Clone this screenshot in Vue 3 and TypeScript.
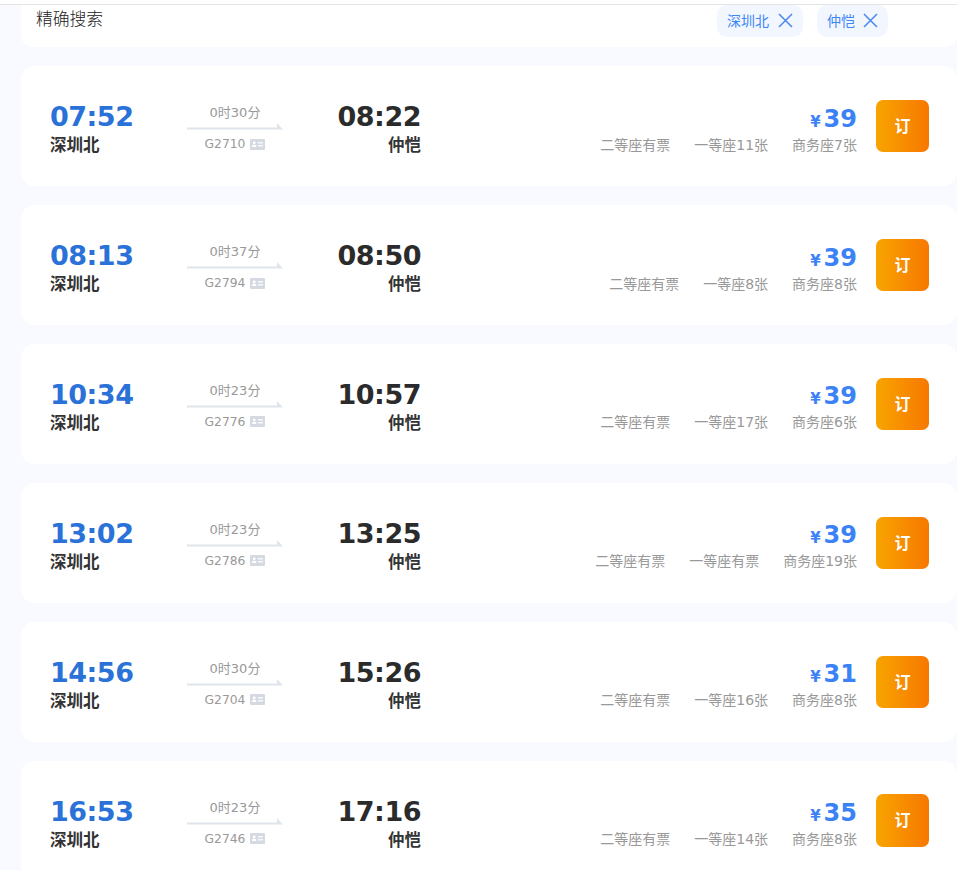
<script setup lang="ts">
interface Train {
  dep: string; arr: string; dur: string; code: string; price: number; seats: string[];
}
const trains: Train[] = [
  { dep: '07:52', arr: '08:22', dur: '0时30分', code: 'G2710', price: 39, seats: ['二等座有票', '一等座11张', '商务座7张'] },
  { dep: '08:13', arr: '08:50', dur: '0时37分', code: 'G2794', price: 39, seats: ['二等座有票', '一等座8张', '商务座8张'] },
  { dep: '10:34', arr: '10:57', dur: '0时23分', code: 'G2776', price: 39, seats: ['二等座有票', '一等座17张', '商务座6张'] },
  { dep: '13:02', arr: '13:25', dur: '0时23分', code: 'G2786', price: 39, seats: ['二等座有票', '一等座有票', '商务座19张'] },
  { dep: '14:56', arr: '15:26', dur: '0时30分', code: 'G2704', price: 31, seats: ['二等座有票', '一等座16张', '商务座8张'] },
  { dep: '16:53', arr: '17:16', dur: '0时23分', code: 'G2746', price: 35, seats: ['二等座有票', '一等座14张', '商务座8张'] },
];
const tags = ['深圳北', '仲恺'];
</script>

<template>
  <div class="page">
    <div class="search">
      <span class="search-title">精确搜索</span>
      <div class="tags">
        <span v-for="t in tags" :key="t" class="tag">
          {{ t }}
          <svg class="x" width="15" height="15" viewBox="0 0 15 15"><path d="M1 1 L14 14 M14 1 L1 14" stroke="#4a86f0" stroke-width="1.5" fill="none" /></svg>
        </span>
      </div>
    </div>
    <div v-for="t in trains" :key="t.code" class="card">
      <div class="col from">
        <div class="time blue">{{ t.dep }}</div>
        <div class="station">深圳北</div>
      </div>
      <div class="mid">
        <div class="dur">{{ t.dur }}</div>
        <svg class="arrow" width="96" height="7" viewBox="0 0 96 7"><path d="M0 4.5 H90 V0 L96 6.5 H0 Z" fill="#e0e5ec" /></svg>
        <div class="code">
          {{ t.code }}
          <svg class="idc" width="15" height="11" viewBox="0 0 15 11"><rect width="15" height="11" rx="1" fill="#d5dae2" /><circle cx="4.2" cy="4" r="1.4" fill="#fff" /><rect x="2.2" y="6" width="4" height="2" fill="#fff" /><rect x="8" y="3.2" width="5" height="1.2" fill="#fff" /><rect x="8" y="6.2" width="5" height="1.2" fill="#fff" /></svg>
        </div>
      </div>
      <div class="col to">
        <div class="time">{{ t.arr }}</div>
        <div class="station">仲恺</div>
      </div>
      <div class="right">
        <div class="price"><span class="yen">¥</span>{{ t.price }}</div>
        <div class="seats"><span v-for="s in t.seats" :key="s">{{ s }}</span></div>
      </div>
      <div class="btn">订</div>
    </div>
  </div>
</template>

<style>
html, body { margin: 0; height: 870px; overflow: hidden; background: #fff; }
</style>

<style scoped>
.page {
  width: 957px; overflow: hidden; box-sizing: border-box;
  background: #f9faff; border-top: 1px solid #e4e4e4; margin-top: 4px;
  padding-left: 21px; display: flex; flex-direction: column; gap: 18.85px;
  font-family: "DejaVu Sans", "Noto Sans CJK SC", sans-serif;
  height: 866px;
}
.search {
  flex: none; height: 42.45px; background: #fff; border-radius: 0 0 12px 12px;
  display: flex; justify-content: space-between; position: relative;
}
.search-title { font-size: 16.8px; color: #222; margin: 2px 0 0 15px; line-height: 24px; font-weight: 300; }
.tags { display: flex; gap: 14px; margin-right: 69px; height: 32px; }
.tag {
  display: flex; align-items: center; gap: 8px; padding: 0 10px 2px 10px; height: 32px; box-sizing: border-box;
  background: #f2f7ff; border-radius: 10px; color: #3f86f5; font-size: 14px;
}
.tag:first-child { gap: 9px; }
.card {
  flex: none; height: 120px; background: #fff; border-radius: 14px;
  display: flex; align-items: center; position: relative; box-sizing: border-box;
  padding: 0 28px 0 29px;
}
.col { display: flex; flex-direction: column; width: 84px; padding-top: 7px; }
.to { align-items: flex-end; }
.time {
  font-family: "DejaVu Sans", sans-serif; font-weight: 700; font-size: 27px; line-height: 34px;
  letter-spacing: -0.5px; color: #2b2b2b; margin-top: -1px;
}
.blue { color: #2a72d8; }
.station { font-size: 16.5px; font-weight: 700; color: #333; line-height: 24px; }
.mid { width: 96px; margin: 0 54px 0 53px; display: flex; flex-direction: column; align-items: center; color: #999; font-size: 13px; padding-top: 5px; }
.dur { line-height: 20px; margin-bottom: 0; }
.arrow { display: block; margin-top: 0; margin-bottom: 4px; }
.code { line-height: 20px; display: flex; align-items: center; gap: 5px; font-size: 12.3px; }
.idc { display: block; }
.right { margin-left: auto; display: flex; flex-direction: column; align-items: flex-end; margin-right: 19px; padding-top: 6px; }
.price { color: #3b82f6; font-family: "DejaVu Sans", sans-serif; font-weight: 700; font-size: 24px; line-height: 32px; }
.yen { font-size: 15px; margin-right: 3px; }
.seats { display: flex; gap: 24px; font-size: 14px; color: #999; line-height: 22px; margin-top: -4px; }
.btn {
  width: 53px; height: 52.3px; border-radius: 7px; flex: none;
  background: linear-gradient(90deg, #f8a400, #f77800);
  color: #fff; font-weight: 700; font-size: 16px; display: flex; align-items: center; justify-content: center;
  padding-bottom: 2px; box-sizing: border-box;
}
</style>
